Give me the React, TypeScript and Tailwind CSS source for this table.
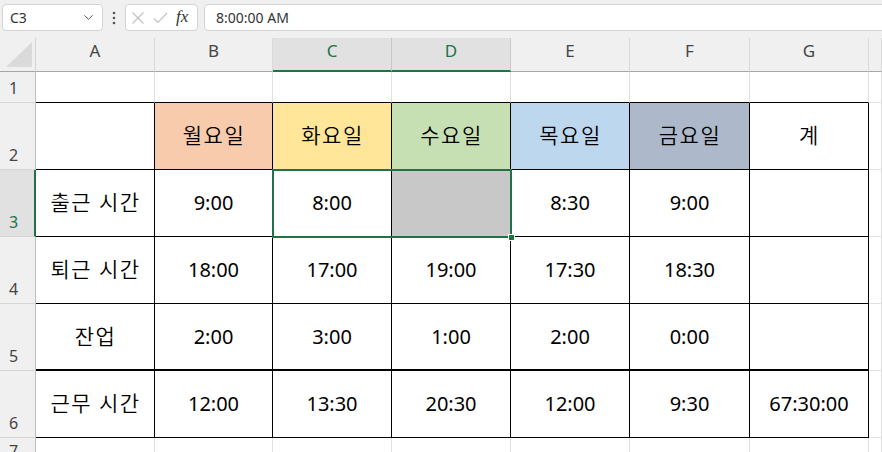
import { ChevronDown } from 'lucide-react';

const COLS = ['A', 'B', 'C', 'D', 'E', 'F', 'G', ''];

const ROWS: string[][] = [
  ['', '', '', '', '', '', ''],
  ['', '월요일', '화요일', '수요일', '목요일', '금요일', '계'],
  ['출근 시간', '9:00', '8:00', '', '8:30', '9:00', ''],
  ['퇴근 시간', '18:00', '17:00', '19:00', '17:30', '18:30', ''],
  ['잔업', '2:00', '3:00', '1:00', '2:00', '0:00', ''],
  ['근무 시간', '12:00', '13:30', '20:30', '12:00', '9:30', '67:30:00'],
  ['', '', '', '', '', '', ''],
];

const ROW_HEIGHTS = ['h-[31px]', 'h-[67px]', 'h-[67px]', 'h-[67px]', 'h-[67px]', 'h-[67px]', 'h-[28px]'];

// fill colours for the weekday header row
const DAY_FILLS: Record<number, string> = {
  1: 'bg-[#f8cbad]',
  2: 'bg-[#ffe699]',
  3: 'bg-[#c6e0b4]',
  4: 'bg-[#bdd7ee]',
  5: 'bg-[#adb9ca]',
};

function cellClass(r: number, c: number) {
  // r: 0-based sheet row (row 1 = 0), c: 0 = A ... 7 = H
  const inTable = r >= 1 && r <= 5 && c <= 6;
  let cls = 'flex items-center justify-center text-black ';
  if (inTable) {
    cls += 'border-r border-black ';
    cls += r === 4 ? 'border-b-2 border-b-black ' : 'border-b border-b-black ';
  } else if (r === 0 && c <= 6) {
    cls += 'border-r border-[#e1e1e1] border-b border-b-black ';
  } else {
    cls += 'border-r border-[#e1e1e1] border-b border-b-[#e1e1e1] ';
  }
  if (r === 1 && DAY_FILLS[c]) cls += DAY_FILLS[c] + ' ';
  else if (r === 2 && c === 3) cls += 'bg-[#c8c8c8] ';
  else cls += 'bg-white ';
  // Korean labels: a bit larger, lighter and more spaced than the numbers
  cls += c === 0 || r === 1 ? 'text-[21px] font-[350] tracking-[1.5px] pl-[1px] ' : 'text-[20px] ';
  return cls;
}

function FormulaBar() {
  return (
    <div className="h-[38px] bg-[#f0f0f0] flex items-start pt-[4px] pl-[2px] text-[14px] text-[#333]">
      <div className="w-[101px] h-[27px] bg-white border border-[#d4d4d4] rounded-[4px] flex items-center justify-between pl-[7px] pr-[6px]">
        <span>C3</span>
        <ChevronDown size={15} strokeWidth={1.6} className="text-[#555]" />
      </div>
      <div className="w-[22px] h-[27px] flex items-center justify-center">
        <svg width="4" height="14" viewBox="0 0 4 14">
          <circle cx="2" cy="2" r="1.3" fill="#555" />
          <circle cx="2" cy="7" r="1.3" fill="#555" />
          <circle cx="2" cy="12" r="1.3" fill="#555" />
        </svg>
      </div>
      <div className="w-[73px] h-[27px] bg-white border border-[#d4d4d4] rounded-[4px] flex items-center pl-[5px] gap-[8px]">
        <svg width="14" height="14" viewBox="0 0 14 14">
          <path d="M1.5 1.5 L12.5 12.5 M12.5 1.5 L1.5 12.5" stroke="#c3c3c3" strokeWidth="1.2" fill="none" />
        </svg>
        <svg width="15" height="14" viewBox="0 0 15 14">
          <path d="M1 7.5 L5 11.5 L14 2" stroke="#c3c3c3" strokeWidth="1.2" fill="none" />
        </svg>
        <span className="italic text-[17px] text-[#333] leading-none font-['Liberation_Serif',serif] pb-[2px]">fx</span>
      </div>
      <div className="flex-1 ml-[6px] mr-[-6px] h-[27px] bg-white border border-[#d4d4d4] rounded-[4px] flex items-center pl-[11px]">
        8:00:00 AM
      </div>
    </div>
  );
}

export default function App() {
  return (
    <div className="w-[882px] h-[452px] overflow-hidden bg-white font-['Noto_Sans','Noto_Sans_CJK_KR',sans-serif]">
      <FormulaBar />
      <div className="relative">
        <div className="grid grid-cols-[36px_119px_118px_119px_119px_119px_120px_119px_1fr]">
          {/* column header row */}
          <div className="h-[34px] bg-[#f0f0f0] border-r border-[#d4d4d4] border-b border-b-[#a6a6a6] flex items-end justify-end">
            <svg width="30" height="27" viewBox="0 0 30 27" className="mb-[3px] mr-[2px]">
              <polygon points="29,1 29,26 3,26" fill="#dadada" />
            </svg>
          </div>
          {COLS.map((col, i) => {
            const sel = col === 'C' || col === 'D';
            return (
              <div
                key={i}
                className={
                  sel
                    ? 'h-[34px] bg-[#e1e1e1] border-r border-[#c8c8c8] border-b-2 border-b-[#217346] flex justify-center pt-[4px] text-[17px] leading-none text-[#217346]'
                    : 'h-[34px] bg-[#f0f0f0] border-r border-[#dadada] border-b border-b-[#a6a6a6] flex justify-center pt-[4px] text-[17px] leading-none text-[#444]'
                }
              >
                {col}
              </div>
            );
          })}

          {ROWS.map((row, r) => (
            <div key={r} className="contents">
              <div
                className={
                  r === 2
                    ? `${ROW_HEIGHTS[r]} bg-[#e1e1e1] border-r-2 border-[#217346] border-b border-b-[#d4d4d4] flex items-end pl-[9px] pb-[6px] text-[16px] leading-none text-[#217346]`
                    : `${ROW_HEIGHTS[r]} bg-[#f0f0f0] border-r border-[#bdbdbd] border-b border-b-[#d4d4d4] flex items-end pl-[9px] pb-[6px] text-[16px] leading-none text-[#444]`
                }
              >
                {r + 1}
              </div>
              {[...row, ''].map((val, c) => (
                <div key={c} className={`${ROW_HEIGHTS[r]} ${cellClass(r, c)}`}>
                  {val}
                </div>
              ))}
            </div>
          ))}
        </div>

        {/* selection C3:D3 */}
        <div className="absolute left-[272px] top-[131px] w-[240px] h-[69px] border-2 border-[#217346] pointer-events-none" />
        <div className="absolute left-[508px] top-[196px] w-[7px] h-[7px] bg-[#217346] border border-white pointer-events-none" />
      </div>
    </div>
  );
}
